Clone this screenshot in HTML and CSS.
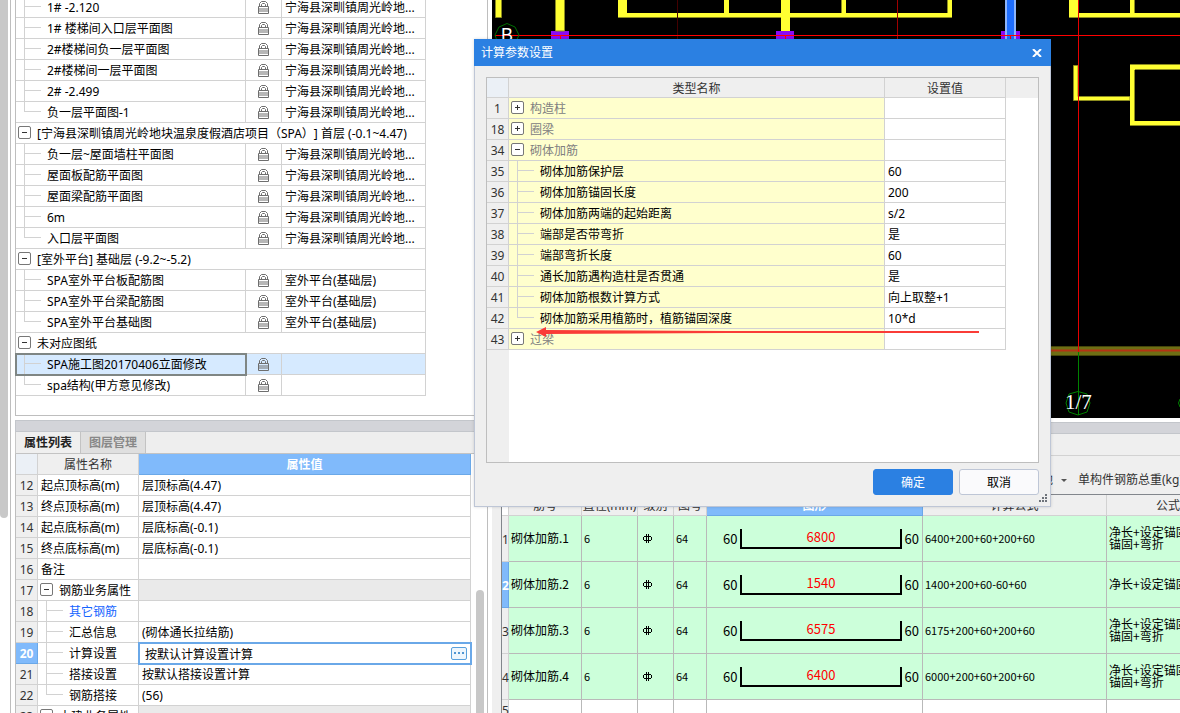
FILE: index.html
```html
<!DOCTYPE html>
<html lang="zh-CN">
<head>
    <meta charset="UTF-8">
    <meta name="viewport" content="width=device-width, initial-scale=1.0">
    <title>计算参数设置</title>
    <link rel="stylesheet" href="styles.css">
</head>
<body>
    <svg class="symbols" aria-hidden="true">
        <symbol id="lock" viewBox="0 0 12 14">
            <path d="M1.500 6V3.500L3.500 1.500H7.500L9.500 3.500V6M3.500 6V4.500L4.500 3.500H6.500L7.500 4.500V6M.5 6.500H10.500V13.500H.5ZM1 9H10M1 11H10" fill="none" stroke="#6e6e6e"/>
        </symbol>
        <symbol id="rebar" viewBox="0 0 9 11">
            <path d="M3.500 1V10M5.500 1V10M1 3.500H8M.5 4V7M8.500 4V7M1 7.500H8" fill="none" stroke="#000"/>
        </symbol>
    </svg>

    <div class="app">
        <div class="outer-scroll"><div class="outer-thumb"></div></div>

        <!-- drawings and properties -->
        <div class="left-pane">
            <div class="drawings">
                <table class="grid drawing-table">
                    <colgroup><col><col class="col-lock"><col class="col-map"></colgroup>
                    <tbody id="drawing-rows"></tbody>
                </table>
            </div>
            <div class="splitter"></div>
            <div class="tabs">
                <button class="tab active">属性列表</button>
                <button class="tab">图层管理</button>
            </div>
            <div class="props">
                <table class="grid prop-table">
                    <colgroup><col class="col-num"><col class="col-name"><col></colgroup>
                    <thead>
                        <tr><th class="corner"></th><th>属性名称</th><th class="current">属性值</th></tr>
                    </thead>
                    <tbody>
                        <tr><th>12</th><td>起点顶标高(m)</td><td>层顶标高(4.47)</td></tr>
                        <tr><th>13</th><td>终点顶标高(m)</td><td>层顶标高(4.47)</td></tr>
                        <tr><th>14</th><td>起点底标高(m)</td><td>层底标高(-0.1)</td></tr>
                        <tr><th>15</th><td>终点底标高(m)</td><td>层底标高(-0.1)</td></tr>
                        <tr><th>16</th><td>备注</td><td></td></tr>
                        <tr><th>17</th><td class="group"><button class="toggle minus" aria-label="折叠"></button>钢筋业务属性</td><td class="blank"></td></tr>
                        <tr><th>18</th><td class="leaf"><a href="#">其它钢筋</a></td><td></td></tr>
                        <tr><th>19</th><td class="leaf">汇总信息</td><td>(砌体通长拉结筋)</td></tr>
                        <tr class="editing">
                            <th>20</th>
                            <td class="leaf"><label for="calc-setting">计算设置</label></td>
                            <td>
                                <div class="editor">
                                    <input id="calc-setting" type="text" value="按默认计算设置计算">
                                    <button class="more" aria-label="更多"><i></i><i></i><i></i></button>
                                </div>
                            </td>
                        </tr>
                        <tr><th>21</th><td class="leaf">搭接设置</td><td>按默认搭接设置计算</td></tr>
                        <tr><th>22</th><td class="leaf last">钢筋搭接</td><td>(56)</td></tr>
                        <tr><th>23</th><td class="group"><button class="toggle minus" aria-label="折叠"></button>土建业务属性</td><td class="blank"></td></tr>
                    </tbody>
                </table>
                <div class="prop-scroll"><div class="prop-thumb"></div></div>
            </div>
        </div>

        <!-- canvas and rebar list -->
        <div class="right-pane">
            <svg class="canvas" role="img" aria-label="平面图">
                <g transform="translate(-492 0)">
                    <g fill="#8c0af5">
                        <path d="M551 31h18v8h-18zM776 31h18v8h-18zM1001 31h19v8h-19z"/>
                    </g>
                    <g fill="#ffff32" stroke="#8c8c1e" stroke-width="1">
                        <path d="M495.500 -1H501.500V17.500H495.500Z"/>
                        <path d="M555.500 -1H564.500V31H555.500Z"/>
                        <path d="M1073.500 65.500H1078V96.500H1130V100.500H1073.500Z"/>
                    </g>
                    <g fill="#ffff32">
                        <path d="M618 0h9v13h97V0h5v13h52V0h9v13h52V0h4v13h101V0h5v18H790v13h-9V18H618z"/>
                        <path d="M1069 0h9v13h52V0h5v13h45v4H1069z"/>
                        <path d="M1130 65h50v4h-45v52h45v4h-50z"/>
                    </g>
                    <g stroke="#8c8c1e">
                        <path d="M618 17.500H781M790 17.500H952M841.500 0V13M947.500 0V13M1069 17.500H1180M1134.500 0V13M1130 64.500H1180M1135 69.500H1180M1134.500 70V121M1130 125.500H1180"/>
                    </g>
                    <path d="M677.500 0V39" stroke="#400"/>
                    <path d="M897.500 0V39" stroke="#a00000"/>
                    <path d="M1005 0h11v39h-11z" fill="#8cb4fa"/>
                    <path d="M1007 0h7v39h-7z" fill="#1e6eff"/>
                    <path d="M1051 346h129v10h-129z" fill="#6e6e14"/>
                    <path d="M1051 346.500H1180M1051 355.500H1180" stroke="#46460a"/>
                    <path d="M1051 350.500H1180" stroke="#b43214" stroke-width="2"/>
                    <path d="M495 35.500H1180M560.500 35V39M785.500 35V39M1010.500 35V39" stroke="#f00"/>
                    <path d="M1078.500 0V352" stroke="#e60000"/>
                    <path d="M1078.500 352V415" stroke="#008200"/>
                    <path d="M507 23.500L515 27L519 35L515 44L507 47L498 44L495 35L499 27Z" fill="none" stroke="#006e00"/>
                    <path d="M1078 391.500L1087 394L1090 403L1087 412L1078 415L1069 412L1066 403L1069 394Z" fill="none" stroke="#008200"/>
                    <path d="M1180 399L1178.500 403L1180 407" fill="none" stroke="#008200"/>
                    <text class="axis" x="501" y="41">B</text>
                    <text class="axis axis-serif" x="1065" y="409">1/7</text>
                </g>
            </svg>
            <div class="splitter"></div>
            <div class="list-title"></div>
            <div class="toolbar">
                <button class="tool">其他<span class="caret"></span></button>
                <span>单构件钢筋总重(kg)</span>
            </div>
            <div class="rebar">
                <table class="rebar-table">
                    <colgroup>
                        <col class="r-num"><col class="r-name"><col class="r-dia"><col class="r-grade"><col class="r-code"><col class="r-shape"><col class="r-formula"><col class="r-desc">
                    </colgroup>
                    <thead>
                        <tr><th class="corner"></th><th>筋号</th><th>直径(mm)</th><th>级别</th><th>图号</th><th class="current">图形</th><th>计算公式</th><th>公式描述</th></tr>
                    </thead>
                    <tbody id="rebar-rows"></tbody>
                </table>
            </div>
        </div>
    </div>

    <!-- settings dialog -->
    <div class="dialog" role="dialog" aria-labelledby="dialog-title">
        <div class="dialog-header">
            <span id="dialog-title">计算参数设置</span>
            <button class="close" aria-label="关闭">
                <svg width="10" height="8" viewBox="0 0 10 8"><path d="M1 0L9 8M9 0L1 8" stroke="#fff" stroke-width="2"/></svg>
            </button>
        </div>
        <div class="dialog-body">
            <div class="param-box">
                <table class="grid param-table">
                    <colgroup><col class="col-num"><col><col class="col-value"><col class="col-rest"></colgroup>
                    <thead>
                        <tr><th class="corner"></th><th>类型名称</th><th>设置值</th><th class="rest"></th></tr>
                    </thead>
                    <tbody id="param-rows"></tbody>
                </table>
                <div class="param-fill"></div>
            </div>
            <div class="actions">
                <button class="btn primary">确定</button>
                <button class="btn">取消</button>
            </div>
        </div>
        <svg class="grip" width="9" height="9" viewBox="0 0 9 9"><path d="M6 0h2v2h-2zM3 3h2v2h-2zM6 3h2v2h-2zM0 6h2v2h-2zM3 6h2v2h-2zM6 6h2v2h-2z" fill="#6e737a"/></svg>
        <svg class="arrow" width="444" height="12" viewBox="0 0 444 12"><path d="M0 6L10 1V4L190 5L443 5V7L190 7L10 8V11Z" fill="#fa3c37"/></svg>
    </div>

    <script src="script.js"></script>
</body>
</html>
```
FILE: styles.css
```css
* {
    margin: 0;
    padding: 0;
    box-sizing: border-box;
}

body {
    font-family: "Noto Sans", "Noto Sans CJK SC", sans-serif;
    font-size: 12px;
    line-height: 20px;
    text-spacing-trim: space-all;
    color: #000;
    background: #fff;
    overflow: hidden;
}

button,
input {
    font: inherit;
    color: inherit;
    border: none;
    background: none;
}

.symbols {
    display: none;
}

.app {
    display: flex;
    height: 100vh;
    overflow: hidden;
}

.outer-scroll {
    width: 11px;
    flex: none;
    border-right: 1px solid #bebebe;
}

.outer-thumb {
    width: 8px;
    height: 518px;
    background: #c8c8c8;
    border-radius: 0 0 4px 4px;
}

.left-pane {
    display: flex;
    flex-direction: column;
    flex: none;
    width: 477px;
    padding-left: 4px;
    border-right: 1px solid #bebebe;
}

.right-pane {
    display: flex;
    flex-direction: column;
    flex: 1;
    min-width: 0;
    padding-left: 4px;
}

.splitter {
    flex: none;
    height: 12px;
    background: #d3d4d9;
    border: 1px solid #c3c6cb;
    border-right: none;
}

/* shared grid look */
.grid {
    table-layout: fixed;
    border-collapse: separate;
    border-spacing: 0;
}

.grid td,
.grid th {
    height: 21px;
    padding-top: 2px;
    line-height: 18px;
    border-right: 1px solid #d2d2d2;
    border-bottom: 1px solid #d2d2d2;
    white-space: nowrap;
}

.grid td {
    padding-left: 3px;
}

.grid th {
    background: #efefef;
    color: #333;
    font-weight: normal;
}

.grid th.corner {
    background: #ebf0f6;
}

.grid th.current {
    background: #80bafb;
    border-color: #6aa8e8;
    color: #fff;
    font-weight: bold;
}

.col-num { width: 22px; }
.col-name { width: 101px; }
.col-lock { width: 36px; }
.col-map { width: 144px; }
.col-value { width: 121px; }
.col-rest { width: 32px; }

.grid td.leaf {
    padding-left: 31px;
    background-image: linear-gradient(#d2d2d2, #d2d2d2), linear-gradient(#d2d2d2, #d2d2d2);
    background-repeat: no-repeat;
    background-position: 8px 0, 8px 9px;
    background-size: 1px 100%, 17px 1px;
}

.grid td.leaf.last {
    background-size: 1px 9px, 17px 1px;
}

.grid td.group {
    padding-left: 2px;
}

.toggle {
    display: inline-block;
    width: 13px;
    height: 13px;
    margin-right: 6px;
    vertical-align: 0;
    border: 1px solid #777;
    border-radius: 2px;
    background: linear-gradient(#333, #333) center / 5px 1px no-repeat #fff;
}

.toggle.plus {
    background: linear-gradient(#333, #333) center / 5px 1px no-repeat, linear-gradient(#333, #333) center / 1px 5px no-repeat #fff;
}

/* drawings */
.drawings {
    margin-top: -3px;
    padding-bottom: 19px;
    border-left: 1px solid #bebebe;
    border-bottom: 1px solid #bebebe;
    margin-bottom: 4px;
}

.drawing-table {
    width: 410px;
}

.drawing-table .lock-cell {
    padding: 0;
    text-align: center;
}

.lock-cell svg {
    display: block;
    width: 12px;
    height: 14px;
    margin: 0 auto;
}

.drawing-table .selected td {
    background-color: #d6eaff;
}

.drawing-table .selected td:first-child {
    outline: 2px solid #7f8684;
    outline-offset: -1px;
}

/* properties */
.tabs {
    display: flex;
    flex: none;
    height: 22px;
    background: #eee;
    border-left: 1px solid #c8c8c8;
    border-bottom: 1px solid #c3c3c3;
}

.tab {
    padding: 0 8px;
    font-weight: bold;
    color: #888;
    background: #dfdfdf;
    border-right: 1px solid #c3c3c3;
}

.tab.active {
    color: #222;
    background: #efefef;
}

.props {
    display: flex;
    flex: 1;
    min-height: 0;
    overflow: hidden;
    border-left: 1px solid #bebebe;
}

.prop-table {
    width: 455px;
    align-self: flex-start;
}

.prop-table a {
    color: #1464ff;
    text-decoration: none;
}

.prop-table .blank {
    background: #eaeaea;
}

.prop-table .editing th {
    background: #80bafb;
    border-color: #6aa8e8;
    color: #fff;
    font-weight: bold;
}

.prop-table .editing td:last-child {
    padding: 0;
    outline: 2px solid #6aa8e8;
    outline-offset: -1px;
}

.editor {
    display: flex;
    align-items: center;
    padding: 0 3px 0 6px;
}

.editor input {
    flex: 1;
    min-width: 0;
    height: 20px;
    padding-top: 2px;
    outline: none;
}

.more {
    display: flex;
    align-items: center;
    justify-content: center;
    gap: 2px;
    width: 16px;
    height: 13px;
    border: 1px solid #5aa0dc;
    border-radius: 2px;
    background: #eef6fd;
}

.more i {
    width: 2px;
    height: 2px;
    background: #5096d2;
}

.prop-scroll {
    flex: 1;
    padding: 136px 0 0 5px;
}

.prop-thumb {
    width: 8px;
    height: 100%;
    background: #c8c8c8;
    border-radius: 4px 4px 0 0;
}

/* canvas */
.canvas {
    display: block;
    flex: none;
    width: 100%;
    height: 418px;
    margin-bottom: 4px;
    background: #000;
}

.axis {
    font-family: "Liberation Sans", sans-serif;
    font-size: 18px;
    fill: #fff;
}

.axis-serif {
    font-family: "Liberation Serif", serif;
    font-size: 21px;
}

/* rebar list */
.list-title {
    flex: none;
    height: 22px;
    background: #efefef;
    border-bottom: 1px solid #d2d2d2;
}

.toolbar {
    display: flex;
    flex: none;
    align-items: center;
    gap: 11px;
    height: 39px;
    padding: 10px 0 0 537px;
    background: #efefef;
    border-bottom: 1px solid #82868c;
    color: #333;
    white-space: nowrap;
    overflow: hidden;
}

.tool {
    display: flex;
    align-items: center;
    gap: 8px;
}

.caret {
    border: 3px solid transparent;
    border-top-color: #555;
    border-bottom: none;
}

.rebar {
    flex: 1;
    min-height: 0;
    overflow: hidden;
    border-left: 9px solid #efefef;
}

.rebar-table {
    width: 753px;
    table-layout: fixed;
    border-collapse: separate;
    border-spacing: 0;
    border-left: 1px solid #82868c;
}

.r-num { width: 7px; }
.r-name { width: 73px; }
.r-dia { width: 56px; }
.r-grade { width: 36px; }
.r-code { width: 33px; }
.r-shape { width: 216px; }
.r-formula { width: 184px; }
.r-desc { width: 147px; }

.rebar-table th {
    height: 21px;
    padding-top: 2px;
    line-height: 18px;
    background: #efefef;
    border-right: 1px solid #d2d2d2;
    border-bottom: 1px solid #d2d2d2;
    color: #333;
    font-weight: normal;
    white-space: nowrap;
}

.rebar-table th.corner {
    background: #fff;
}

.rebar-table th.current,
.rebar-table .selected th {
    background: #80bafb;
    border-color: #6aa8e8;
    color: #fff;
    font-weight: bold;
}

.rebar-table td {
    height: 46px;
    padding: 0 0 2px 2px;
    background: #ccffda;
    border-right: 1px solid #b9b9b9;
    border-bottom: 1px solid #b9b9b9;
    font-family: "Noto Sans CJK SC", sans-serif;
    line-height: 12px;
    white-space: nowrap;
}

.rebar-table .empty td {
    height: 21px;
    background: #fff;
}

.rebar-table .small {
    font-size: 11px;
}

.rebar-table .grade {
    padding: 0 0 0 5px;
}

.grade svg {
    display: block;
    width: 9px;
    height: 11px;
}

.rebar-table .shape-cell {
    padding-bottom: 0;
}

.shape {
    display: flex;
    align-items: center;
    gap: 3px;
    padding: 0 3px 0 14px;
    font-size: 13px;
}

.bend {
    flex: 1;
    height: 20px;
    border: 2px solid #000;
    border-top: none;
    line-height: 16px;
    text-align: center;
    color: #f00;
}

/* dialog */
.dialog {
    position: absolute;
    left: 474px;
    top: 39px;
    width: 577px;
    background: #efefef;
    border: 1px solid #bec6d6;
    border-top: none;
    box-shadow: 0 0 3px rgba(0,0,0,0.15);
}

.dialog-header {
    display: flex;
    align-items: center;
    justify-content: space-between;
    height: 27px;
    margin: 0 -1px;
    padding: 0 9px 0 7px;
    background: #2b80e2;
    color: #fff;
}

.close {
    display: flex;
}

.dialog-body {
    padding: 11px 11px;
}

.param-box {
    display: flex;
    flex-direction: column;
    border: 1px solid #bebebe;
    background: #fff;
}

.param-table {
    width: 100%;
}

.param-table thead th {
    height: 20px;
    line-height: 17px;
}

.param-table th.rest {
    border-color: #efefef;
}

.param-table td.name {
    background-color: #ffffcd;
}

.param-table td.group {
    color: #808080;
}

.param-table td.rest {
    border: none;
}

.param-fill {
    width: 22px;
    height: 112px;
    background: #efefef;
}

.actions {
    display: flex;
    justify-content: flex-end;
    gap: 6px;
    margin-top: 6px;
}

.btn {
    width: 80px;
    height: 26px;
    padding-top: 2px;
    border: 1px solid #bec6d6;
    border-radius: 3px;
    background: #fafafc;
}

.btn.primary {
    background: #2b80e2;
    border-color: #2b80e2;
    color: #fff;
}

.grip {
    position: absolute;
    right: 2px;
    bottom: 3px;
}

.arrow {
    position: absolute;
    left: 61px;
    top: 287px;
}
```
FILE: script.js
```js
const siteName = '宁海县深甽镇周光岭地...';
const outdoor = '室外平台(基础层)';

// { group } is a heading row, { name, map } is a drawing under it
const drawings = [
    { name: '1# -2.120', map: siteName },
    { name: '1# 楼梯间入口层平面图', map: siteName },
    { name: '2#楼梯间负一层平面图', map: siteName },
    { name: '2#楼梯间一层平面图', map: siteName },
    { name: '2# -2.499', map: siteName },
    { name: '负一层平面图-1', map: siteName },
    { group: '[宁海县深甽镇周光岭地块温泉度假酒店项目（SPA）] 首层 (-0.1~4.47)' },
    { name: '负一层~屋面墙柱平面图', map: siteName },
    { name: '屋面板配筋平面图', map: siteName },
    { name: '屋面梁配筋平面图', map: siteName },
    { name: '6m', map: siteName },
    { name: '入口层平面图', map: siteName },
    { group: '[室外平台] 基础层 (-9.2~-5.2)' },
    { name: 'SPA室外平台板配筋图', map: outdoor },
    { name: 'SPA室外平台梁配筋图', map: outdoor },
    { name: 'SPA室外平台基础图', map: outdoor },
    { group: '未对应图纸' },
    { name: 'SPA施工图20170406立面修改', map: '', selected: true },
    { name: 'spa结构(甲方意见修改)', map: '' }
];

const params = [
    { no: 1, group: '构造柱', sign: 'plus' },
    { no: 18, group: '圈梁', sign: 'plus' },
    { no: 34, group: '砌体加筋', sign: 'minus' },
    { no: 35, name: '砌体加筋保护层', value: '60' },
    { no: 36, name: '砌体加筋锚固长度', value: '200' },
    { no: 37, name: '砌体加筋两端的起始距离', value: 's/2' },
    { no: 38, name: '端部是否带弯折', value: '是' },
    { no: 39, name: '端部弯折长度', value: '60' },
    { no: 40, name: '通长加筋遇构造柱是否贯通', value: '是' },
    { no: 41, name: '砌体加筋根数计算方式', value: '向上取整+1' },
    { no: 42, name: '砌体加筋采用植筋时，植筋锚固深度', value: '10*d' },
    { no: 43, group: '过梁', sign: 'plus' }
];

const rebars = [
    { length: 6800, formula: '6400+200+60+200+60', desc: '净长+设定锚固+设定<br>锚固+弯折' },
    { length: 1540, formula: '1400+200+60-60+60', desc: '净长+设定锚固+弯折', selected: true },
    { length: 6575, formula: '6175+200+60+200+60', desc: '净长+设定锚固+设定<br>锚固+弯折' },
    { length: 6400, formula: '6000+200+60+200+60', desc: '净长+设定锚固+设定<br>锚固+弯折' }
];

function toggle(sign) {
    return `<button class="toggle ${sign}" aria-label="${sign === 'plus' ? '展开' : '折叠'}"></button>`;
}

function leafClass(rows, i) {
    return !rows[i + 1] || rows[i + 1].group ? 'leaf last' : 'leaf';
}

document.getElementById('drawing-rows').innerHTML = drawings.map((row, i) => {
    if (row.group) {
        return `<tr><td class="group" colspan="3">${toggle('minus')}${row.group}</td></tr>`;
    }
    return `
        <tr class="${row.selected ? 'selected' : ''}">
            <td class="${leafClass(drawings, i)}">${row.name}</td>
            <td class="lock-cell"><svg><use href="#lock"/></svg></td>
            <td>${row.map}</td>
        </tr>
    `;
}).join('');

document.getElementById('param-rows').innerHTML = params.map((row, i) => {
    const name = row.group
        ? `<td class="name group">${toggle(row.sign)}${row.group}</td>`
        : `<td class="name ${leafClass(params, i)}">${row.name}</td>`;
    return `<tr><th>${row.no}</th>${name}<td>${row.value || ''}</td><td class="rest"></td></tr>`;
}).join('');

document.getElementById('rebar-rows').innerHTML = rebars.map((row, i) => `
    <tr class="${row.selected ? 'selected' : ''}">
        <th>${i + 1}</th>
        <td>砌体加筋.${i + 1}</td>
        <td class="small">6</td>
        <td class="grade"><svg><use href="#rebar"/></svg></td>
        <td class="small">64</td>
        <td class="shape-cell"><div class="shape"><span>60</span><div class="bend">${row.length}</div><span>60</span></div></td>
        <td class="small">${row.formula}</td>
        <td>${row.desc}</td>
    </tr>
`).join('') + '<tr class="empty"><th>5</th>' + '<td></td>'.repeat(7) + '</tr>';
```
